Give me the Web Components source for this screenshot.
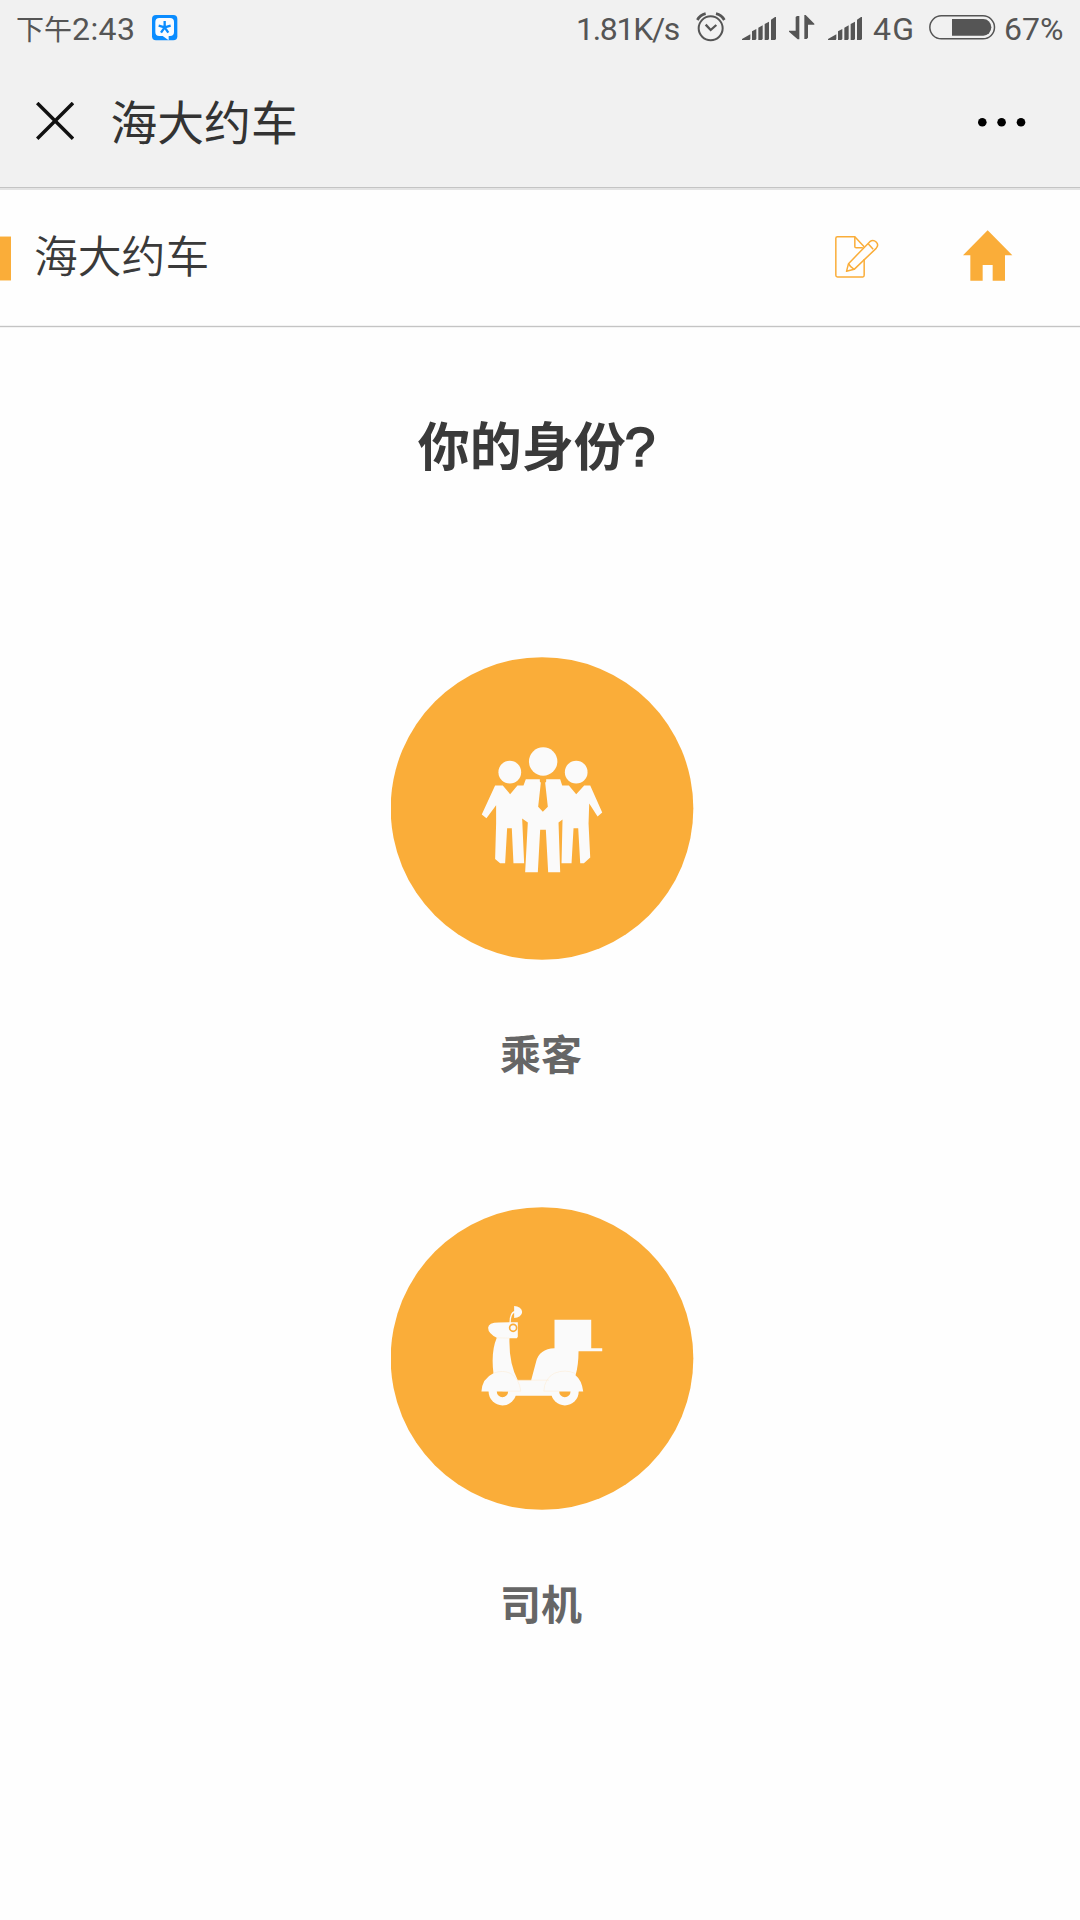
<!DOCTYPE html>
<html lang="zh-CN">
<head>
<meta charset="utf-8">
<title>海大约车</title>
<style>
  html, body { margin: 0; padding: 0; background: #fefefe; }
  body { font-family: "Noto Sans CJK SC", sans-serif; }
</style>
</head>
<body>
<ride-app></ride-app>
<script>
const define = (name, html) => customElements.define(name, class extends HTMLElement {
  constructor() {
    super();
    this.attachShadow({ mode: 'open' }).innerHTML = html;
  }
});

define('signal-bars', `
  <style>:host{display:block;width:34px;height:23px} svg{display:block}</style>
  <svg width="34" height="23" viewBox="0 0 102 69" fill="#555">
    <path d="M0 69v-3L25 52v14l-2 3zM30 69V43l13-7v30l-3 3zM49 69V32l13-7v41l-3 3zM68 69V21l13-7v52l-3 3zM87 69V8l12-8h3v66l-3 3z"/>
  </svg>`);

define('status-bar', `
  <style>
    :host{display:flex;height:60px;box-sizing:border-box;padding:0 16px;color:#555;font:32px/58px Roboto,"Noto Sans CJK SC",sans-serif;white-space:nowrap}
    svg{display:block;flex:none}
    span{flex:none;display:block;height:60px}
    .ampm{font:28px/56px "Noto Sans CJK SC",sans-serif;width:56px}
    .time{width:63px;letter-spacing:.4px}
    .app{margin:15px 0 0 17px}
    .speed{margin-left:auto;width:103px;letter-spacing:-1.3px}
    .alarm{margin:12px 0 0 17px}
    .s1{margin:17px 0 0 16px}
    .arrows{margin:15px 0 0 13px}
    .s2{margin:17px 0 0 13px}
    .net{margin-left:11px;width:43px;letter-spacing:1.2px}
    .batt{margin:15px 0 0 13px}
    .pct{margin-left:8px;width:60px;letter-spacing:0}
  </style>
  <span class="ampm">下午</span><span class="time">2:43</span>
  <svg class="app" width="26" height="26" viewBox="0 0 78 78">
    <rect width="76" height="76" rx="12" fill="#0a8cff"/>
    <path d="M22 9H54Q66 9 66 21V51Q66 63 54 63H50V76L32 63H22Q10 63 10 51V21Q10 9 22 9Z" fill="#f8fbff"/>
    <path d="M38 37V18M38 37L20 32M38 37L56 32M38 37L27 53M38 37L49 53" stroke="#0a8cff" stroke-width="7" fill="none"/>
  </svg>
  <span class="speed">1.81K/s</span>
  <svg class="alarm" width="30" height="30" viewBox="0 0 90 90" fill="none" stroke="#555" stroke-width="6">
    <circle cx="44" cy="49" r="36"/><path d="M29 38L44 54L61 39" stroke-width="7"/>
    <path d="M4 24Q12 9 29 5M60 5Q77 9 85 24" stroke-width="8"/>
  </svg>
  <signal-bars class="s1"></signal-bars>
  <svg class="arrows" width="26" height="25" viewBox="0 0 78 75" fill="#555"><path d="M31 3V73H26L0 50V47H20V6L24 3ZM46 0H50L76 26V29H57V68L53 72H46Z"/></svg>
  <signal-bars class="s2"></signal-bars>
  <span class="net">4G</span>
  <svg class="batt" width="67" height="25" viewBox="0 0 201 75"><rect x="2.5" y="2.5" width="194" height="69" rx="34.5" fill="none" stroke="#555" stroke-width="4.5"/><path d="M69 12H163A24 25 0 0 1 163 62H69Z" fill="#555"/></svg>
  <span class="pct">67%</span>`);

define('nav-bar', `
  <style>
    :host{display:flex;height:130px;box-sizing:border-box;border-bottom:2px solid #e4e4e4;box-shadow:inset 0 -1px #c4c4c4;color:#333}
    svg{display:block;flex:none}
    .close{margin:42px 0 0 36px}
    .title{margin-left:36.500px;font-size:46.800px;font-weight:400;line-height:119px;height:119px}
    .more{margin:57px 53px 0 auto}
  </style>
  <svg class="close" width="38" height="39" viewBox="0 0 38 39"><path d="M1.200 1L37 36.800M37 1L1.200 36.800" stroke="#111" stroke-width="3.500"/></svg>
  <div class="title"><slot></slot></div>
  <svg class="more" width="50" height="10" viewBox="0 0 50 10"><circle cx="5.3" cy="5.2" r="4.3"/><circle cx="24.6" cy="5.2" r="4.3"/><circle cx="44" cy="5.2" r="4.3"/></svg>`);

define('page-header', `
  <style>
    :host{display:flex;height:137px;box-sizing:border-box;border-bottom:1px solid #c4c4c4;box-shadow:0 1px #f3f3f3,inset 0 -1px #f3f3f3;color:#3a3a3a}
    svg{display:block;flex:none}
    .mark{width:11px;height:45px;box-sizing:border-box;border:solid #fcd9a2;border-width:1px 0;margin-top:46px;background:#faad39}
    .title{margin-left:23px;font-size:43.800px;font-weight:350;line-height:129px;height:129px}
    .edit{margin:45px 0 0 auto}
    .home{margin:40px 67px 0 84px}
  </style>
  <div class="mark"></div>
  <div class="title"><slot></slot></div>
  <svg class="edit" width="44" height="44" viewBox="0 0 132 132" fill="none" stroke="#faad39" stroke-width="4.500" stroke-linejoin="round">
    <g transform="translate(-.500 -4)"><path d="M88 39L60 9H8Q3 9 3 14V125Q3 130 8 130H84Q88 130 88 125V76"/><path d="M60 9V39Q60 42 64 42H84"/>
    <path d="M35 113L41 90L105 24Q115 16 124 25Q133 34 124 44L58 107Z"/><path d="M100 30L115 47M41 90Q45 99 58 107"/></g>
  </svg>
  <svg class="home" width="50" height="51" viewBox="0 0 150 153"><path d="M74 1L148 76H126V152H89V105H59V152H22V76H0Z" fill="#faad39"/></svg>`);

define('role-choice', `
  <style>
    :host{display:flex;flex-direction:column;align-items:center;height:550px}
    .disc{width:303px;height:303px;margin-left:4px}
    .label{margin:62px 0 0 2px;font-size:41px;line-height:60px;font-weight:700;color:#666}
  </style>
  <div class="disc"><slot name="icon"></slot></div>
  <div class="label"><slot></slot></div>`);

define('people-icon', `
  <style>:host,svg{display:block}</style>
  <svg width="303" height="303" viewBox="-237 -219 908 908" fill="#fafafa">
    <circle cx="215.500" cy="235" r="453.500" fill="#faad39"/>
    <circle cx="219" cy="94" r="42.500"/><circle cx="119" cy="126" r="34"/><circle cx="318" cy="126" r="34"/>
    <path d="M75 166H98L120 192L142 166H160L167 147H209V154L212 158L204 230L218 245L233 230L225 158L228 154V147H270L276 166H296L318 192L342 166H360L396 247L382 259L357 220L355 280L360 382L341 399H330L324 294H310L304 399H274L277 268L265 277L270 426H234L227 299H210L203 426H165L173 277L156 265L162 399H130L125 294H111L105 399H90L75 386L78 280V225L49 264L35 253Z"/>
  </svg>`);

define('scooter-icon', `
  <style>:host,svg{display:block}</style>
  <svg width="303" height="303" viewBox="-237 -249 908 908" fill="#fafafa">
    <circle cx="215.500" cy="205" r="453.500" fill="#faad39"/>
    <circle cx="97" cy="304" r="41.500"/><circle cx="284" cy="304" r="41.500"/>
    <path d="M253 89H363V174H396V183H325Q325 225 316 255Q335 270 339 304H300V317H80V304H34Q36 265 70 249Q62 185 80 143Q54 130 54 113Q55 97 86 97L118 96Q119 67 132 63V48A24 18 0 0 1 132 84V68Q122 75 122 96H143V140L140 144H118Q116 220 143 270H183L198 214Q207 176 253 174Z"/>
    <circle cx="129" cy="113" r="10.500" fill="none" stroke="#faad39" stroke-width="5"/>
    <path d="M80 304H114A17 17 0 0 1 80 304ZM267 304H301A17 17 0 0 1 267 304Z" fill="#faad39"/>
    <path d="M70 249Q98 238 122 250Q148 267 152 303H97M80 143L118 144M143 270H183M316 250Q285 236 253 249Q223 264 221 303H267M183 270H236" fill="none" stroke="#fcebd1" stroke-width="1.500"/>
  </svg>`);

define('ride-app', `
  <style>
    :host{display:block;width:1080px;height:1920px;overflow:hidden;background:#fefefe}
    .chrome{background:#f1f1f1}
    h1{margin:0;padding-top:80px;height:250px;text-align:center;font-size:52px;line-height:74px;font-weight:700;color:#3a3a3a;text-indent:-7px}
    .q{font-family:"Liberation Sans",sans-serif;font-size:55px;font-weight:400;line-height:1px;-webkit-text-stroke:1.700px #3a3a3a;margin-left:-1px}
  </style>
  <div class="chrome"><status-bar></status-bar><nav-bar>海大约车</nav-bar></div>
  <page-header>海大约车</page-header>
  <h1>你的身份<span class="q">?</span></h1>
  <role-choice><people-icon slot="icon"></people-icon>乘客</role-choice>
  <role-choice><scooter-icon slot="icon"></scooter-icon>司机</role-choice>`);
</script>
</body>
</html>
